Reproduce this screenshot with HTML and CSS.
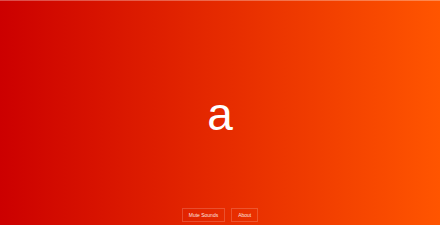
FILE: index.html
```html
<!DOCTYPE html>
<html lang="en">
<head>
  <meta charset="UTF-8">
  <meta name="viewport" content="width=device-width, initial-scale=1.0">
  <title>Letters</title>
  <link rel="stylesheet" href="styles.css">
</head>
<body>
  <!-- Current letter -->
  <main class="stage">
    <div id="letter" class="letter">a</div>
  </main>

  <!-- Controls -->
  <footer class="controls">
    <button class="control-btn">Mute Sounds</button>
    <button class="control-btn">About</button>
  </footer>
</body>
</html>
```

FILE: styles.css
```css
html,
body {
  height: 100%;
}

body {
  font-family: "Liberation Sans", Arial, sans-serif;
  background: linear-gradient(to right, #cc0000, #ff5500);
  border-top: 1px solid rgba(255, 255, 255, 0.3);
  box-sizing: border-box;
  margin: 0;
  padding: 0;
  display: flex;
  flex-direction: column;
  color: #fff;
}

.stage {
  flex: 1;
  display: flex;
  justify-content: center;
  align-items: center;
  padding-top: 18px;
}

.letter {
  font-size: 46px;
  line-height: 1;
}

/* Bottom buttons */
.controls {
  display: flex;
  justify-content: center;
  gap: 6px;
  padding-bottom: 3px;
}

.control-btn {
  font-family: inherit;
  font-size: 5px;
  line-height: 6px;
  color: rgba(255, 255, 255, 0.9);
  background: transparent;
  border: 1px solid rgba(255, 255, 255, 0.18);
  padding: 3px 6px;
  cursor: pointer;
}
```
